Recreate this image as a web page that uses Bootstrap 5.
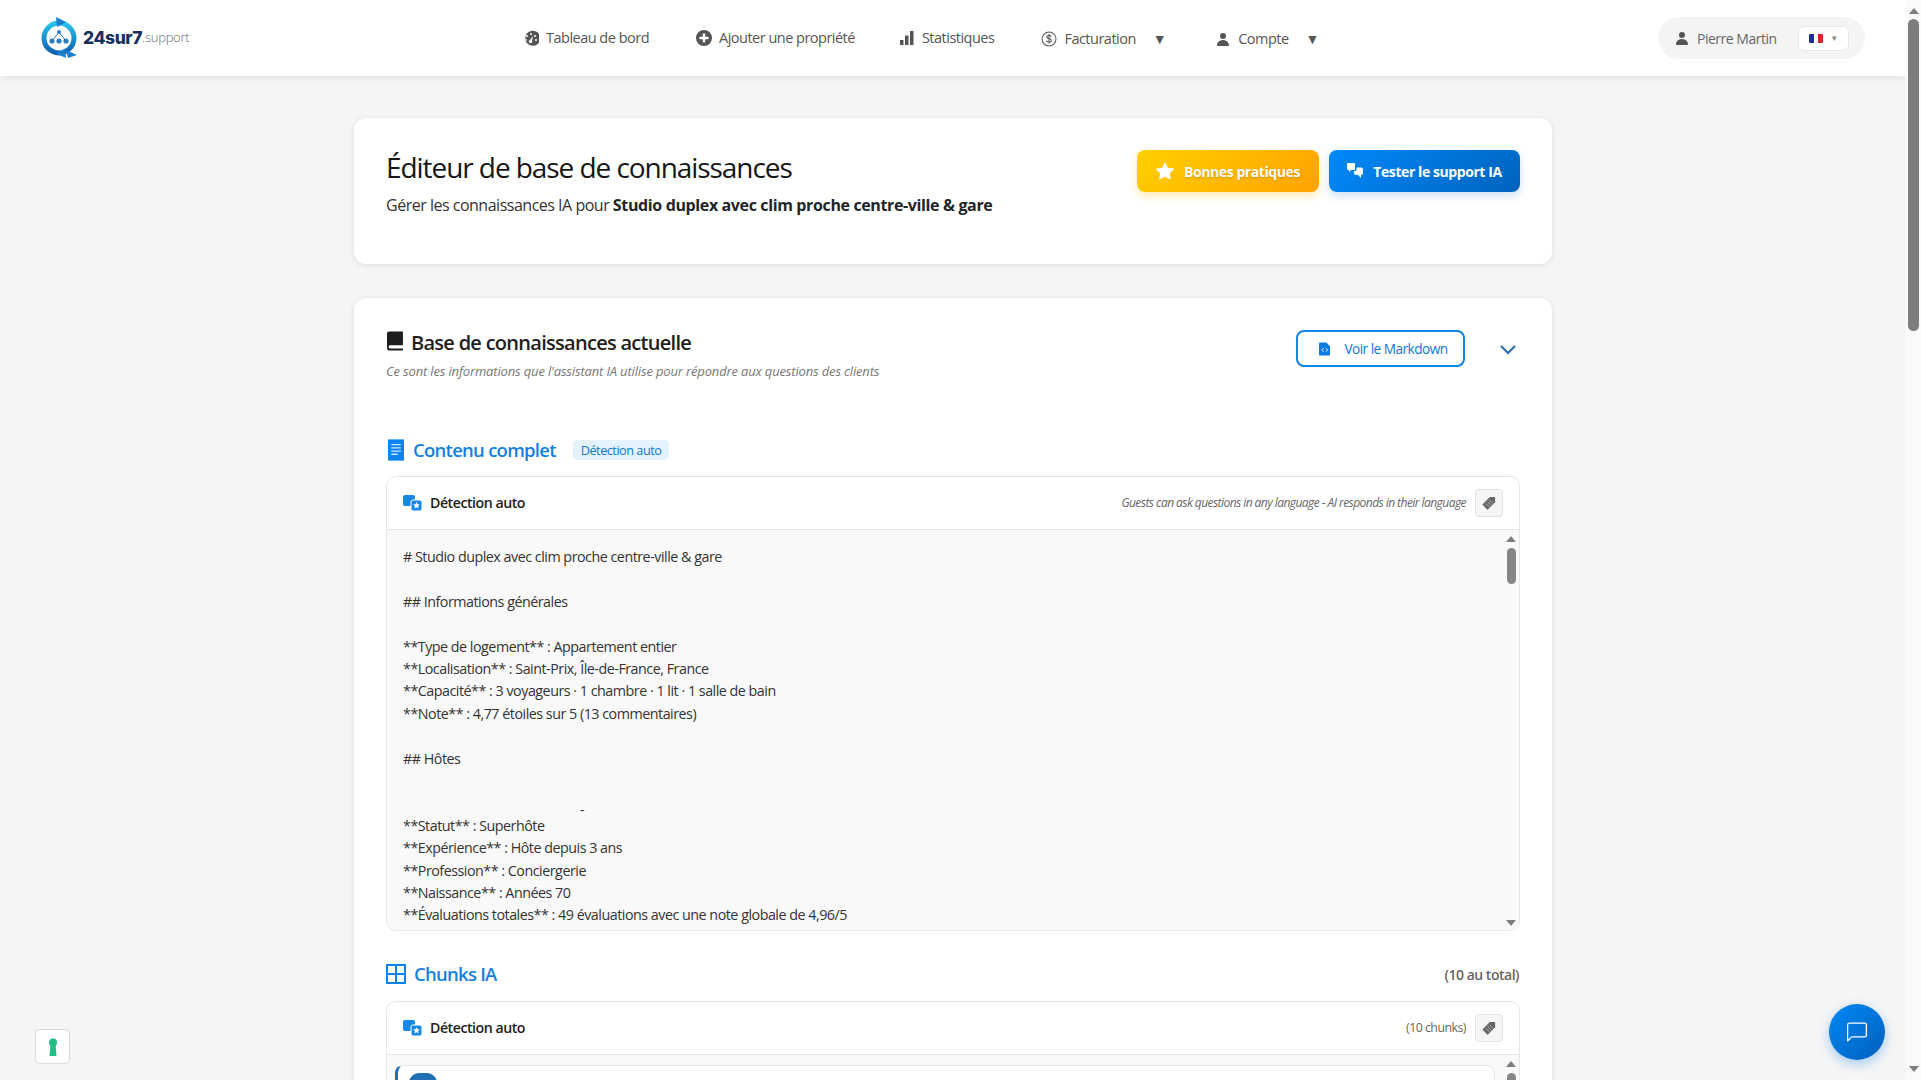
<!DOCTYPE html>
<html lang="fr">
<head>
<meta charset="utf-8">
<title>Éditeur de base de connaissances</title>
<link href="https://cdn.jsdelivr.net/npm/bootstrap@5.3.0/dist/css/bootstrap.min.css" rel="stylesheet">
<style>
html,body{height:100%;overflow:hidden}
body{font-family:"Open Sans","Noto Sans",sans-serif;background:#f5f5f5;color:#212529;font-size:14px;letter-spacing:-.035em}
.app-shell{height:1080px}
.page-col{min-width:0;position:relative;overflow:hidden}
.page-sb{width:15px;background:#fafafa;flex:none}
.sb-up{width:0;height:0;border:5px solid transparent;border-top:0;border-bottom:6px solid #7d7d7d;margin:0 auto}
.sb-down{width:0;height:0;border:5px solid transparent;border-bottom:0;border-top:6px solid #7d7d7d;margin:0 auto}
.page-thumb{width:11px;height:312px;background:#7d7d7d;border-radius:6px;margin:5px auto 0}
.topbar{height:76px;background:#fff;box-shadow:0 2px 10px rgba(0,0,0,.08);padding:0 41px 0 40px;flex:none;position:relative;z-index:2}
.logo-mark{width:39px;height:42px;flex:none}
.logo-name{font-family:"Inter","Open Sans",sans-serif;font-weight:800;font-size:17.5px;color:#17305c;letter-spacing:-.025em;margin-left:4px}
.logo-tld{font-family:"Open Sans",sans-serif;font-weight:300;font-size:13px;color:#5f6b76;letter-spacing:-.02em}
.main-nav{position:absolute;left:523px;top:0;height:76px}
.nav-entry{color:#555;font-size:14.5px;font-weight:500;text-decoration:none;letter-spacing:-.035em}
.nav-gap1{margin-right:47px}
.nav-gap2{margin-right:44px}
.nav-gap3{margin-right:47px}
.nav-gap4{margin-right:48px}
.nav-low{padding-top:1px}
.nav-ico{width:16px;height:16px;fill:#555;margin-right:7px;flex:none}
.caret-mark{color:#555;font-size:14px;margin-left:17px;margin-right:1px}
.user-pill{width:207px;height:42px;border-radius:21px;background:#f4f4f4;color:#666;font-size:14px;padding:0 16px 0 16px}
.flag-box{width:51px;height:25px;background:#fff;border:1px solid #e8e8e8;border-radius:6px;gap:7px}
.flag-mini{width:14px;height:9px;border-radius:1px;background:linear-gradient(90deg,#1e2f8f 33%,#fff 33% 66%,#d8232a 66%)}
.tiny-caret{font-size:8px;color:#888}
.content-wrap{width:1198px;margin:42px 0 0 354px}
.panel-card{background:#fff;border-radius:12px;box-shadow:0 1px 6px rgba(0,0,0,.09);padding:32px}
.panel-head{height:146px;margin-bottom:34px}
.ttl-main{font-size:28px;font-weight:500;line-height:34px;margin:0 0 10px;color:#161616;letter-spacing:-.038em}
.ttl-sub{font-size:16px;line-height:22px;color:#333}
.ttl-sub b{font-weight:700;color:#212529;letter-spacing:-.023em}
.cta-btn{height:42px;border:0;border-radius:8px;color:#fff;font-weight:700;font-size:14px;letter-spacing:-.03em;gap:10px}
.cta-gold{width:182px;background:linear-gradient(135deg,#ffd000,#ffa200);box-shadow:0 4px 10px rgba(255,190,0,.3);text-shadow:0 1px 2px rgba(0,0,0,.2)}
.cta-blue{width:191px;margin-left:10px;background:linear-gradient(135deg,#0089fb,#0063bd);box-shadow:0 4px 10px rgba(0,100,200,.2)}
.kb-title{font-size:20px;font-weight:600;line-height:28px;margin:-1px 0 0;color:#1e1e1e;letter-spacing:-.036em}
.kb-ico{margin:-5px 7px 0 1px}
.kb-sub{font-size:13px;font-style:italic;color:#777;margin-top:5px;line-height:18px;letter-spacing:-.012em}
.md-btn{width:169px;height:37px;border:2px solid #0f85e6;border-radius:8px;background:#fff;color:#1177db;font-size:13.7px;font-weight:500;gap:14px;letter-spacing:-.04em;padding:1px 0 0 6px}
.chev-ico{width:18px;height:18px;margin-left:34px;margin-right:3px;stroke:#2a6aa8;stroke-width:2;fill:none}
.sect-row{height:26px;margin-top:57px;margin-bottom:13px}
.sect-title{font-size:18.5px;font-weight:600;color:#147fe0;margin:0;line-height:26px;letter-spacing:-.04em}
.sect-ico{margin:0 9px 0 1px}
.auto-chip{background:#e3f2fd;color:#1177cc;font-size:12.7px;font-weight:500;border-radius:5px;padding:0 8px;height:20px;line-height:20px;margin-left:17px}
.lang-box{border:1px solid #e6e6e6;border-radius:10px;overflow:hidden;background:#fff}
.lang-head{height:53px;padding:0 16px 0 16px;border-bottom:1px solid #e6e6e6}
.lang-name{font-size:14.2px;font-weight:600;margin-left:8px;color:#222}
.hint-txt{font-size:12px;font-style:italic;color:#666;margin-right:9px;letter-spacing:-.046em}
.count-txt{font-size:12.3px;font-weight:500;color:#666;margin-right:9px}
.tag-btn{width:28px;height:28px;border:1px solid #e2e2e2;border-radius:4px;background:#f5f5f5}
.lang-body{height:400px;background:#f9f9f9}
.md-text{font-size:14.3px;line-height:22.4px;padding:16px 16px 0;color:#333;overflow:hidden;flex:1}
.md-lines{white-space:pre}
.dash-row{height:22.4px;padding-left:177px;line-height:10px}
.inner-sb{width:16px;flex:none;padding-top:6px}
.inner-thumb{width:9px;height:36px;background:#868686;border-radius:5px;margin:6px auto 0}
.sb-spacer{flex:1}
.chunk-row{height:26px;margin-top:30px;margin-bottom:14px}
.total-txt{font-size:14px;font-weight:600;color:#666;margin-right:1px}
.chunk-body{background:#f9f9f9;height:120px}
.chunk-card{flex:1;height:110px;margin:10px 0 0 8px;background:#fff;border:1px solid #e6e6e6;border-left:3px solid #1f6fb2;border-radius:8px 8px 0 0;padding:7px 0 0 11px}
.chunk-pill{width:28px;height:20px;background:#1f6fb2;border-radius:10px}
.fab-chat{position:absolute;right:21px;bottom:20px;width:56px;height:56px;border-radius:50%;background:linear-gradient(135deg,#0088f5,#0060bd);box-shadow:0 4px 12px rgba(0,120,230,.35)}
.key-tile{position:absolute;left:35px;bottom:16px;width:35px;height:35px;background:#fff;border:1px solid #dcdcdc;border-radius:5px}
</style>
</head>
<body>
<svg width="0" height="0" class="d-none"><defs>
<symbol id="tr-ico" viewBox="0 0 19 16"><rect width="12" height="11" rx="2" fill="#1688ec"/><rect x="8" y="5" width="11" height="11" rx="2" fill="#1688ec" stroke="#fff"/><path d="M13.500 7l1 2.300 2.400.2-1.800 1.600.5 2.400-2.100-1.300-2.100 1.300.5-2.400-1.800-1.600 2.400-.2z" fill="#fff"/></symbol>
<symbol id="tag-ico" viewBox="0 0 16 16"><path d="M9 1h5a1 1 0 0 1 1 1v5l-8 8a1 1 0 0 1-1.400 0L1 10.400A1 1 0 0 1 1 9z" fill="#666"/><path d="M4.500 8.500l4 4M6.500 6.500l4 4M8.500 4.500l4 4" stroke="#ddd" stroke-width=".7"/></symbol>
</defs></svg>
<div class="app-shell d-flex">
  <div class="page-col flex-grow-1">
    <header class="topbar d-flex align-items-center justify-content-between">
      <div class="d-flex align-items-center">
        <svg class="logo-mark" viewBox="0 0 39 42"><defs><linearGradient id="lg" x1="0" y1="0" x2="0" y2="1"><stop offset="0" stop-color="#27c3ef"/><stop offset="1" stop-color="#0d5fb0"/></linearGradient></defs><circle cx="19" cy="21" r="15" fill="none" stroke="url(#lg)" stroke-width="5"/><path d="M16 0l10 5-9 5zM26 41l-10-4.500 9-5zM26 33l11 5-9 3z" fill="#1a7fcc"/><circle cx="12" cy="24" r="2.600" fill="#2a7fc0"/><circle cx="19" cy="24" r="2.600" fill="#2a7fc0"/><circle cx="26" cy="24" r="2.600" fill="#2a7fc0"/><circle cx="19" cy="15" r="2" fill="#2a7fc0"/><path d="M12 24l7-9 7 9" stroke="#2a7fc0" fill="none"/></svg>
        <span class="logo-name">24sur7</span><span class="logo-tld">.support</span>
      </div>
      <nav class="main-nav d-flex align-items-center">
        <a class="nav-entry d-flex align-items-center nav-gap1" href="#"><svg class="nav-ico" viewBox="0 0 16 16"><path fill-rule="evenodd" d="M8 1a7.500 7.500 0 1 1 0 14.500A7.500 7.500 0 0 1 8 1zM8 3a1 1 0 1 0 0 2 1 1 0 0 0 0-2zM4 5a1 1 0 1 0 0 2 1 1 0 0 0 0-2zM12 5a1 1 0 1 0 0 2 1 1 0 0 0 0-2zM3 9a1 1 0 1 0 0 2 1 1 0 0 0 0-2zM13 9a1 1 0 1 0 0 2 1 1 0 0 0 0-2zM10 6L7 10a1.600 1.600 0 1 0 2 1z"/></svg>Tableau de bord</a>
        <a class="nav-entry d-flex align-items-center nav-gap2" href="#"><svg class="nav-ico" viewBox="0 0 16 16"><path d="M16 8A8 8 0 1 1 0 8a8 8 0 0 1 16 0zM9.200 3.500H6.800v3.300H3.500v2.400h3.300v3.300h2.400V9.200h3.300V6.800H9.200z"/></svg>Ajouter une propriété</a>
        <a class="nav-entry d-flex align-items-center nav-gap3" href="#"><svg class="nav-ico" viewBox="0 0 16 16"><path d="M1 10h3.500v5H1zM6 5.500h3.500V15H6zM11 1h3.500v14H11z"/></svg>Statistiques</a>
        <a class="nav-entry nav-low d-flex align-items-center nav-gap4" href="#"><svg class="nav-ico" viewBox="0 0 16 16"><path fill-rule="evenodd" d="M8 .5a7.500 7.500 0 1 1 0 15 7.500 7.500 0 0 1 0-15zm0 1a6.500 6.500 0 1 0 0 13 6.500 6.500 0 0 0 0-13z"/><path d="M7.500 3h1v1.100c1.200.1 2 .8 2.100 1.900H9.500c-.1-.6-.5-.9-1-1v2.300c1.400.3 2.300.9 2.300 2.100s-1 2-2.300 2.100V12.500h-1v-1.100C6.100 11.300 5.200 10.500 5.100 9.400h1.100c.1.700.6 1 1.300 1.100V8.100C6.200 7.800 5.400 7.200 5.400 6.100S6.300 4.200 7.500 4.100zm0 2.100c-.6.100-1 .5-1 1s.4.800 1 1zm1 3.200v2.200c.7-.1 1.200-.5 1.200-1.100s-.5-.9-1.200-1.100z"/></svg>Facturation<span class="caret-mark">▼</span></a>
        <a class="nav-entry nav-low d-flex align-items-center" href="#"><svg class="nav-ico" viewBox="0 0 16 16"><path d="M3 15s-1 0-1-1 1-5 6-5 6 4 6 5-1 1-1 1zm5-7a3 3 0 1 0 0-6 3 3 0 0 0 0 6z"/></svg>Compte<span class="caret-mark">▼</span></a>
      </nav>
      <div class="user-pill d-flex align-items-center">
        <svg class="nav-ico" viewBox="0 0 16 16"><path d="M3 15s-1 0-1-1 1-5 6-5 6 4 6 5-1 1-1 1zm5-7a3 3 0 1 0 0-6 3 3 0 0 0 0 6z"/></svg>
        <span class="flex-grow-1">Pierre Martin</span>
        <span class="flag-box d-flex align-items-center justify-content-center"><span class="flag-mini"></span><span class="tiny-caret">▼</span></span>
      </div>
    </header>

    <main class="content-wrap">
      <section class="panel-card panel-head d-flex justify-content-between align-items-start">
        <div>
          <h1 class="ttl-main">Éditeur de base de connaissances</h1>
          <div class="ttl-sub">Gérer les connaissances IA pour <b>Studio duplex avec clim proche centre-ville &amp; gare</b></div>
        </div>
        <div class="d-flex">
          <button class="cta-btn cta-gold d-flex align-items-center justify-content-center" type="button"><svg width="18" height="18" viewBox="0 0 16 16" fill="#fff"><path d="M3.612 15.443c-.386.198-.824-.149-.746-.592l.83-4.73L.173 6.765c-.329-.314-.158-.888.283-.95l4.898-.696L7.538.792c.197-.39.73-.39.927 0l2.184 4.327 4.898.696c.441.062.612.636.282.95l-3.522 3.356.83 4.730c.078.443-.36.79-.746.592L8 13.187l-4.389 2.256z"/></svg>Bonnes pratiques</button>
          <button class="cta-btn cta-blue d-flex align-items-center justify-content-center" type="button"><svg width="16" height="16" viewBox="0 0 16 16" fill="#fff"><path d="M1 0h6a1 1 0 0 1 1 1v5a1 1 0 0 1-1 1H4L2 9V7H1a1 1 0 0 1-1-1V1a1 1 0 0 1 1-1z"/><path d="M9.500 4.500h4.500a2 2 0 0 1 2 2V10a2 2 0 0 1-2 2v3l-3-3H9a2 2 0 0 1-2-2V8h1a1.500 1.500 0 0 0 1.500-1.500z"/></svg>Tester le support IA</button>
        </div>
      </section>

      <section class="panel-card">
        <div class="d-flex justify-content-between align-items-start">
          <div>
            <h2 class="kb-title d-flex align-items-center"><svg class="kb-ico" width="17" height="20" viewBox="0 0 16 18" fill="#1e1e1e"><path d="M2 0h13v13H3a1 1 0 0 0 0 3h12v2H3a3 3 0 0 1-3-3V2a2 2 0 0 1 2-2z"/></svg>Base de connaissances actuelle</h2>
            <div class="kb-sub">Ce sont les informations que l'assistant IA utilise pour répondre aux questions des clients</div>
          </div>
          <div class="d-flex align-items-center">
            <button class="md-btn d-flex align-items-center justify-content-center" type="button"><svg width="11" height="14" viewBox="0 0 12 14" fill="#0b7be6"><path d="M1 0h7l4 4v9a1 1 0 0 1-1 1H1a1 1 0 0 1-1-1V1a1 1 0 0 1 1-1z"/><path d="M5 6L3 8l2 2M7.500 6l2 2-2 2" stroke="#fff" fill="none" stroke-width="1"/></svg>Voir le Markdown</button>
            <svg class="chev-ico" viewBox="0 0 18 18"><path d="M2 6l7 7 7-7"/></svg>
          </div>
        </div>

        <div class="sect-row d-flex align-items-center">
          <svg class="sect-ico" width="17" height="22" viewBox="0 0 16 20"><rect x="1" width="15" height="20" fill="#0b84f0"/><path d="M4 5h9M4 8h9M4 11h9M4 14h6" stroke="#cfe6fb" stroke-width="1.200"/></svg>
          <h3 class="sect-title">Contenu complet</h3>
          <span class="auto-chip">Détection auto</span>
        </div>

        <div class="lang-box">
          <div class="lang-head d-flex align-items-center justify-content-between">
            <div class="d-flex align-items-center">
              <svg width="19" height="16"><use href="#tr-ico"/></svg>
              <span class="lang-name">Détection auto</span>
            </div>
            <div class="d-flex align-items-center">
              <span class="hint-txt">Guests can ask questions in any language - AI responds in their language</span>
              <span class="tag-btn d-flex align-items-center justify-content-center"><svg width="14" height="14"><use href="#tag-ico"/></svg></span>
            </div>
          </div>
          <div class="lang-body d-flex">
            <div class="md-text">
<div class="md-lines"># Studio duplex avec clim proche centre-ville &amp; gare

## Informations générales

**Type de logement** : Appartement entier
**Localisation** : Saint-Prix, Île-de-France, France
**Capacité** : 3 voyageurs · 1 chambre · 1 lit · 1 salle de bain
**Note** : 4,77 étoiles sur 5 (13 commentaires)

## Hôtes

</div><div class="dash-row d-flex align-items-end"><span>-</span></div><div class="md-lines">**Statut** : Superhôte
**Expérience** : Hôte depuis 3 ans
**Profession** : Conciergerie
**Naissance** : Années 70
**Évaluations totales** : 49 évaluations avec une note globale de 4,96/5</div></div>
            <div class="inner-sb d-flex flex-column">
              <div class="sb-up"></div>
              <div class="inner-thumb"></div>
              <div class="sb-spacer"></div>
              <div class="sb-down mb-1"></div>
            </div>
          </div>
        </div>

        <div class="chunk-row d-flex align-items-center justify-content-between">
          <div class="d-flex align-items-center">
            <svg class="me-2" width="20" height="20" viewBox="0 0 20 20" fill="none" stroke="#0b84f0" stroke-width="2"><rect x="1" y="1" width="18" height="18"/><path d="M10 1v18M1 10h18"/></svg>
            <h3 class="sect-title">Chunks IA</h3>
          </div>
          <span class="total-txt">(10 au total)</span>
        </div>

        <div class="lang-box">
          <div class="lang-head d-flex align-items-center justify-content-between">
            <div class="d-flex align-items-center">
              <svg width="19" height="16"><use href="#tr-ico"/></svg>
              <span class="lang-name">Détection auto</span>
            </div>
            <div class="d-flex align-items-center">
              <span class="count-txt">(10 chunks)</span>
              <span class="tag-btn d-flex align-items-center justify-content-center"><svg width="14" height="14"><use href="#tag-ico"/></svg></span>
            </div>
          </div>
          <div class="chunk-body d-flex">
            <div class="chunk-card"><div class="chunk-pill"></div></div>
            <div class="inner-sb d-flex flex-column ms-2"><div class="sb-up"></div><div class="inner-thumb"></div></div>
          </div>
        </div>
      </section>
    </main>

    <div class="key-tile d-flex align-items-center justify-content-center"><svg width="10" height="18" viewBox="0 0 10 18" fill="#1fbf86"><circle cx="5" cy="4.500" r="4"/><path d="M2.500 6h5L8.500 18h-7z"/></svg></div>
    <div class="fab-chat d-flex align-items-center justify-content-center"><svg width="20" height="21" viewBox="0 0 16 16" fill="#fff"><path d="M14 1a1 1 0 0 1 1 1v8a1 1 0 0 1-1 1H4.414A2 2 0 0 0 3 11.586l-2 2V2a1 1 0 0 1 1-1h12zM2 0a2 2 0 0 0-2 2v12.793a.5.5 0 0 0 .854.353l2.853-2.853A1 1 0 0 1 4.414 12H14a2 2 0 0 0 2-2V2a2 2 0 0 0-2-2H2z"/></svg></div>
  </div>
  <aside class="page-sb d-flex flex-column pt-1">
    <div class="sb-up mt-1"></div>
    <div class="page-thumb"></div>
    <div class="sb-spacer"></div>
    <div class="sb-down mb-2"></div>
  </aside>
</div>
<script src="https://cdn.jsdelivr.net/npm/bootstrap@5.3.0/dist/js/bootstrap.bundle.min.js"></script>
</body>
</html>
